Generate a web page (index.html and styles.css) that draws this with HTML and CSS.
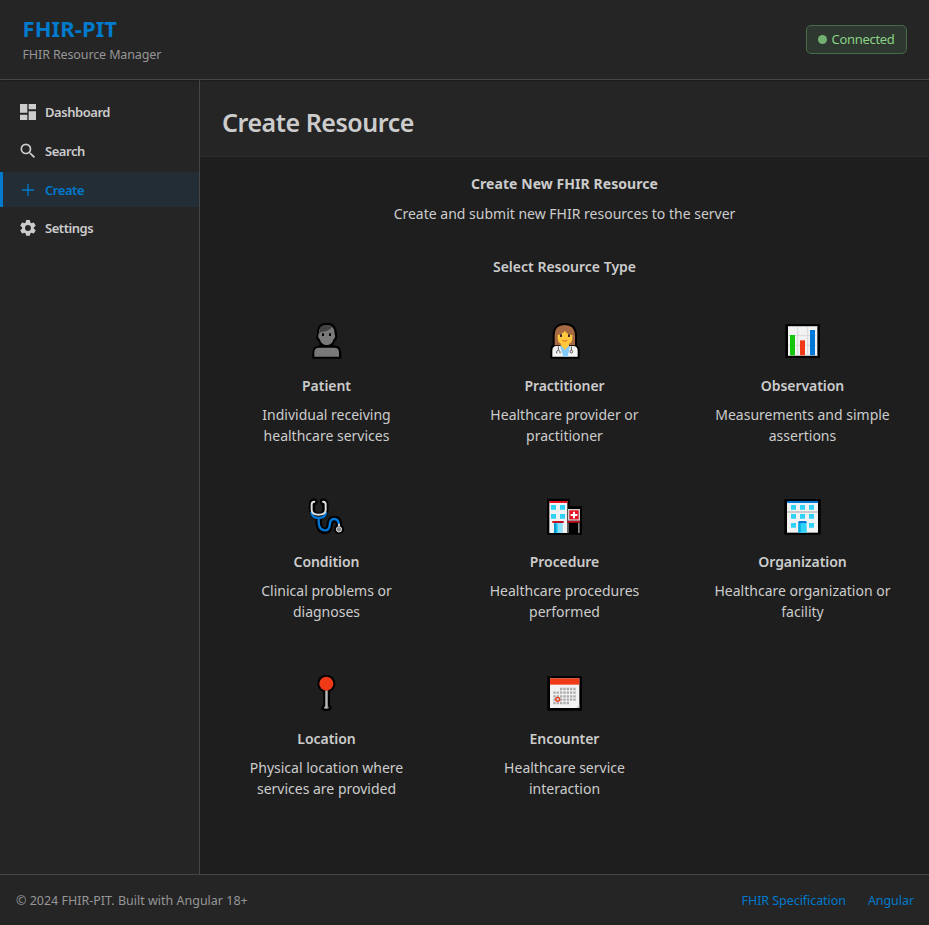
FILE: index.html
```html
<!DOCTYPE html>
<html lang="en">
<head>
<meta charset="utf-8">
<title>FHIR-PIT</title>
<link rel="stylesheet" href="styles.css">
</head>
<body>
<div class="app">
  <header class="topbar">
    <div class="brand">
      <h1>FHIR-PIT</h1>
      <p>FHIR Resource Manager</p>
    </div>
    <div class="status"><i class="dot"></i><span>Connected</span></div>
  </header>
  <div class="body">
    <nav class="sidebar">
      <a class="item"><svg viewBox="0 0 24 24"><path d="M0 0h11v13H0zM13 0h11v8H13zM13 11h11v13H13zM0 16h11v8H0z"/></svg><span>Dashboard</span></a>
      <a class="item"><svg class="low" viewBox="0 0 24 24"><path transform="translate(-3 -3) scale(1.25)" d="M15.5 14h-.79l-.28-.27A6.47 6.47 0 0 0 16 9.5 6.5 6.5 0 1 0 9.5 16c1.61 0 3.09-.59 4.23-1.57l.27.28v.79l5 4.99L20.49 19l-4.99-5zm-6 0C7.01 14 5 11.99 5 9.5S7.01 5 9.5 5 14 7.01 14 9.5 11.99 14 9.5 14z"/></svg><span>Search</span></a>
      <a class="item active"><svg class="low" viewBox="0 0 24 24"><path d="M11 3h2v8h8v2h-8v8h-2v-8H3v-2h8z"/></svg><span>Create</span></a>
      <a class="item"><svg viewBox="0 0 24 24"><path transform="translate(-2.8 -2.8) scale(1.23)" d="M19.14 12.94c.04-.3.06-.61.06-.94 0-.32-.02-.64-.07-.94l2.03-1.58c.18-.14.23-.41.12-.61l-1.92-3.32c-.12-.22-.37-.29-.59-.22l-2.39.96c-.5-.38-1.03-.7-1.62-.94l-.36-2.54c-.04-.24-.24-.41-.48-.41h-3.84c-.24 0-.43.17-.47.41l-.36 2.54c-.59.24-1.13.57-1.62.94l-2.39-.96c-.22-.08-.47 0-.59.22L2.74 8.87c-.12.21-.08.47.12.61l2.03 1.58c-.05.3-.09.63-.09.94s.02.64.07.94l-2.03 1.58c-.18.14-.23.41-.12.61l1.92 3.32c.12.22.37.29.59.22l2.39-.96c.5.38 1.03.7 1.62.94l.36 2.54c.05.24.24.41.48.41h3.84c.24 0 .44-.17.47-.41l.36-2.54c.59-.24 1.13-.56 1.62-.94l2.39.96c.22.08.47 0 .59-.22l1.92-3.32c.12-.22.07-.47-.12-.61l-2.01-1.58zM12 15.6A3.6 3.6 0 1 1 12 8.4a3.6 3.6 0 0 1 0 7.2z"/></svg><span>Settings</span></a>
    </nav>
    <main class="main">
      <div class="page-head"><h2>Create Resource</h2></div>
      <section class="content">
        <h3>Create New FHIR Resource</h3>
        <p class="lead">Create and submit new FHIR resources to the server</p>
        <h4>Select Resource Type</h4>
        <div class="grid">
          <article class="card">
            <svg class="pic" viewBox="0 0 162 150"><path d="M37 131v-18q0-19 17-21l6-1-4-12q-8-4-7-14l2-8q-1-34 29-34t31 34q4 14-6 22l-6 12q25 0 25 22v18z"/><path fill="#797979" d="M43 125v-13q0-14 14-14h46q14 0 14 14v13zM56 57q0-27 24-27t24 27q4 11-3 15-5 18-21 18T59 72q-7-4-3-15z"/><path fill="#424242" d="M57 58q-1-29 23-28 12 1 16 7-4 7-16 11-14 2-19 4z"/><path d="M66 55h6v8h-6zM87 55h6v8h-6z"/></svg>
            <h5>Patient</h5>
            <p>Individual receiving<br>healthcare services</p>
          </article>
          <article class="card">
            <svg class="pic" viewBox="0 0 162 150"><path d="M37 131v-27q0-11 7-14V62q0-38 36-38t37 38v30q8 4 8 15v24z"/><path fill="#a56a43" d="M50 91V61q0-31 30-31t31 31v30z"/><path fill="#ffc83d" d="M59 59q15-1 21-12 8 11 23 13v10q0 18-22 20Q59 88 59 70zM68 88h25v10H68z"/><path fill="#f3f3f3" d="M43 125v-18q0-14 13-14h49q14 0 14 14v18z"/><path fill="#83cbff" d="M66 93h30l-7 32H76z"/><path fill="#ffc83d" d="M68 90h25L81 105z"/><g fill="none" stroke="#555" stroke-width="3"><path d="M61 94v12m-5 9v-6q5-8 10 0v6M100 94v12"/><circle cx="100" cy="110" r="4"/></g><path fill="#402a32" d="M66 58h6v8h-6zM90 58h6v8h-6z"/><path d="M73 76q8 6 15 0" fill="none" stroke="#e45b24" stroke-width="3"/></svg>
            <h5>Practitioner</h5>
            <p>Healthcare provider or<br>practitioner</p>
          </article>
          <article class="card">
            <svg class="pic" viewBox="0 0 162 150"><path d="M28 27h104v102H28z"/><path fill="#f2f2f2" d="M36 34h88v89H36z"/><path d="M36 62h88M36 91h88M65 34v88M95 34v88" stroke="#d8d8d8" stroke-width="3"/><path fill="#bbb" d="M36 33h88v3H36zM36 120h88v3H36z"/><path fill="#16c60c" d="M42 60h15v61H42z"/><path fill="#f03a17" d="M72 76h15v45H72z"/><path fill="#0078d7" d="M102 45h15v76h-15z"/></svg>
            <h5>Observation</h5>
            <p>Measurements and simple<br>assertions</p>
          </article>
          <article class="card">
            <svg class="pic" viewBox="0 0 162 150"><g fill="none" stroke-linecap="round" stroke-linejoin="round"><g stroke="#000" stroke-width="19"><path d="M43 32q-7 0-7 8v14q0 21 20 21t20-21V40q0-8-7-8M56 75v16q0 29 19 29 12 0 14-16 1-20 13-20 15 0 15 19v10"/></g><path d="M34 66q4 15 22 15t22-15M56 81v10q0 27 19 27 12 0 14-15 1-19 13-19 15 0 15 20" stroke="#0078d7" stroke-width="7"/><path d="M43 32q-8 0-8 8v17q0 14 21 14t21-14V40q0-8-8-8" stroke="#ddd" stroke-width="6"/></g><circle cx="117" cy="115" r="15"/><circle cx="117" cy="115" r="8" fill="#888" stroke="#ddd" stroke-width="3"/><path fill="#ccc" d="M114 98h6v8h-6z"/></svg>
            <h5>Condition</h5>
            <p>Clinical problems or<br>diagnoses</p>
          </article>
          <article class="card">
            <svg class="pic" viewBox="0 0 162 150"><path d="M27 23h68v23h37v85H27z"/><path fill="#f2f2f2" d="M34 30h54v96H34z"/><path fill="#e81224" d="M34 30h54v6H34z"/><path fill="#31d2f7" d="M39 42h15v14H39zM66 42h15v14H66zM39 69h15v14H39zM66 69h15v14H66zM48 97h25v29H48z"/><path fill="#0099ce" d="M48 97h7v29h-7z"/><path fill="#90dff8" d="M60 97h13v29H60z"/><path fill="#c50f1f" d="M43 90h34v6H43zM88 89h38v6H88z"/><path fill="#d0d0d0" d="M90 54h36v35H90z"/><path fill="#e81224" d="M94 58h28v27H94z"/><path fill="#fff" d="M105 62h6v7h7v6h-7v7h-6v-7h-7v-6h7z"/><path fill="#888" d="M120 96h5v30h-5zM89 96h3v30h-3z"/></svg>
            <h5>Procedure</h5>
            <p>Healthcare procedures<br>performed</p>
          </article>
          <article class="card">
            <svg class="pic" viewBox="0 0 162 150"><path d="M25 24h109v107H25z"/><path fill="#f2f2f2" d="M33 30h93v95H33z"/><path fill="#0078d7" d="M33 30h93v6H33z"/><path fill="#ccc" d="M33 60h93v6H33z"/><path fill="#31d2f7" d="M45 42h15v14H45zM72 42h15v14H72zM99 42h15v14H99zM45 69h15v14H45zM72 69h15v14H72zM99 69h15v14H99zM45 96h15v14H45zM99 96h15v14H99zM67 94h25v31H67z"/><path fill="#0078d7" d="M69 90h21l3 6H66z"/><path fill="#00a8e0" d="M67 96h7v29h-7z"/></svg>
            <h5>Organization</h5>
            <p>Healthcare organization or<br>facility</p>
          </article>
          <article class="card last">
            <svg class="pic" viewBox="0 0 162 150"><circle cx="79" cy="50" r="27"/><path d="M70 72h20v42q5 3 5 9 0 9-16 9t-15-9q0-6 6-9z"/><path fill="#999" d="M72 120q7-4 14 0v4q-7 3-14 0z"/><path fill="#d0d0d0" d="M76 70h7v52h-7z"/><path fill="#888" d="M80 70h3v52h-3z"/><circle cx="79" cy="50" r="21" fill="#f03a17"/></svg>
            <h5>Location</h5>
            <p>Physical location where<br>services are provided</p>
          </article>
          <article class="card last">
            <svg class="pic" viewBox="0 0 162 150"><path d="M28 27h104v104H28z"/><path fill="#f2f2f2" d="M36 34h88v89H36z"/><path fill="#f03a17" d="M36 34h88v19H36z"/><g stroke="#aaa" stroke-width="7" stroke-dasharray="7 3"><path d="M66 66h48M46 77h68M46 88h68M46 98h68M46 108h48"/></g><circle cx="59" cy="97" r="6" fill="#ccc" stroke="#f03a17" stroke-width="4"/><path fill="#ccc" d="M114 123l10-10v10z"/></svg>
            <h5>Encounter</h5>
            <p>Healthcare service<br>interaction</p>
          </article>
        </div>
      </section>
    </main>
  </div>
  <footer class="footer">
    <span>© 2024 FHIR-PIT. Built with Angular 18+</span>
    <div class="links"><a>FHIR Specification</a><a>Angular</a></div>
  </footer>
</div>
</body>
</html>
```
FILE: styles.css
```css
* { box-sizing: border-box; margin: 0; padding: 0; }
body {
  background: #1e1e1e;
  color: #cccccc;
  font-family: "Segoe UI", "Noto Sans", sans-serif;
  font-size: 14px;
  line-height: 21px;
}
h1, h2, h3, h4, h5 { font-weight: 600; }
.app { display: flex; flex-direction: column; height: 925px; }
.topbar {
  display: flex; align-items: center; justify-content: space-between;
  height: 80px; padding: 0 22px 0 22.5px;
  background: #252526; border-bottom: 1px solid #464647;
}
.brand h1 { color: #007acc; font-size: 22px; font-weight: 700; line-height: 25px; letter-spacing: 0.1px; }
.brand p { color: #969696; font-size: 12.5px; line-height: 18px; margin-top: 5px; letter-spacing: -0.12px; }
.status {
  display: flex; align-items: center; gap: 5px;
  width: 101px; height: 29px; padding-left: 10.5px;
  border: 1px solid #456b48; border-radius: 5px;
  background: #2f3830; color: #89d185; font-size: 13px; letter-spacing: -0.3px;
}
.dot { width: 9px; height: 9px; border-radius: 50%; background: #73b173; }
.body { display: flex; flex: 1; min-height: 0; }
.sidebar {
  width: 200px; padding-top: 14px; background: #252526;
  border-right: 1px solid #464647; box-shadow: inset 0 2px 2px -1px #1b1b1b;
}
.item {
  display: flex; align-items: center; gap: 9px;
  height: 35px; margin-bottom: 3.8px; padding-left: 17px;
  border-left: 3px solid transparent; font-size: 13px; font-weight: 600; letter-spacing: -0.45px;
}
.item span { padding-top: 2px; }
.item svg { width: 16px; height: 16px; fill: currentColor; }
.item svg.low { margin-top: 2px; }
.item.active { color: #007acc; background: #222d36; border-left-color: #007acc; }
.main { flex: 1; }
.page-head {
  display: flex; align-items: center; height: 77px; padding: 8px 22px 0;
  background: #252526; border-bottom: 1px solid #2d2d30;
  box-shadow: inset 0 2px 2px -1px #1b1b1b;
}
.page-head h2 { font-size: 25px; font-weight: 600; line-height: 34px; letter-spacing: -0.45px; }
.content { padding-top: 16px; text-align: center; }
.content h3, .content h4, .content h5 { font-size: 14px; line-height: 21px; }
.content h3 { font-weight: 700; letter-spacing: 0.06px; }
.content h5 { letter-spacing: -0.05px; }
.lead { margin-top: 9px; }
.content h4 { margin-top: 32px; }
.grid { display: grid; grid-template-columns: repeat(3, 238px); justify-content: center; row-gap: 45px; margin-top: 38px; }
.pic { display: block; width: 54px; height: 50px; margin: 0 auto; }
.card h5 { margin-top: 10px; }
.card.last h5 { margin-top: 11px; }
.card p { margin-top: 8px; }
.footer {
  display: flex; align-items: center; justify-content: space-between;
  height: 51px; padding: 0 15px 0 16px; background: #252526;
  border-top: 1px solid #464647; color: #969696; font-size: 12.5px;
}
.links { display: flex; gap: 22px; color: #007acc; letter-spacing: -0.06px; }
```
